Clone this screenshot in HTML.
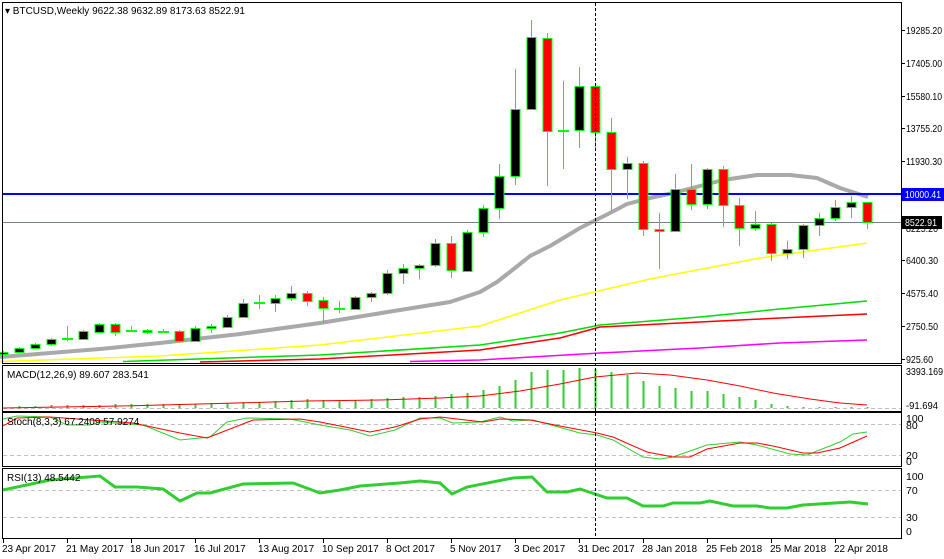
<!DOCTYPE html>
<html><head><meta charset="utf-8"><style>
html,body{margin:0;padding:0;background:#fff;}
svg{display:block;font-family:"Liberation Sans",sans-serif;font-size:10px;}
</style></head><body>
<svg width="944" height="559" viewBox="0 0 944 559" xmlns="http://www.w3.org/2000/svg">
<rect width="944" height="559" fill="#fff"/>
<g fill="none" stroke-linejoin="round">
<polyline stroke="#ff00ff" stroke-width="1.5" points="410,361.5 480,360 600,353 700,348 780,343 867,340"/>
<polyline stroke="#ff0000" stroke-width="1.5" points="200,362 320,359 480,350 560,338 600,327 700,322 780,318 867,314"/>
<polyline stroke="#00dd00" stroke-width="1.5" points="123,361.5 320,355 480,345 560,333 600,325 700,317 780,309 867,301"/>
<polyline stroke="#ffff00" stroke-width="1.5" points="0,361.5 160,356 320,345 480,326 560,300 650,279 760,258 867,243"/>
<polyline stroke="#a9a9a9" stroke-width="4" points="0,357 50,353 100,349 160,343 240,334 320,323 400,310 450,302 480,292 497,282 515,268 530,256 550,246 580,228 610,213 627,204 650,198 673,193 700,186 723,180 757,175 790,175 817,178 840,188 868,197"/>
</g>
<line x1="3" y1="222.5" x2="901" y2="222.5" stroke="#708090" stroke-width="1"/>
<line x1="3" y1="194" x2="901" y2="194" stroke="#0000ff" stroke-width="2"/>
<g stroke="#00ff00" stroke-width="1" shape-rendering="crispEdges">
<line x1="3.5" y1="351" x2="3.5" y2="355"/><rect x="-1" y="352.5" width="9" height="2" fill="#000"/>
<line x1="19.5" y1="347" x2="19.5" y2="353"/><rect x="15" y="348.5" width="9" height="4" fill="#000"/>
<line x1="35.5" y1="343" x2="35.5" y2="349"/><rect x="31" y="344.5" width="9" height="4" fill="#000"/>
<line x1="51.5" y1="338" x2="51.5" y2="346"/><rect x="47" y="339.5" width="9" height="5" fill="#000"/>
<line x1="67.5" y1="326" x2="67.5" y2="341"/><rect x="62.5" y="338.5" width="10" height="1" fill="#00ff00"/>
<line x1="83.5" y1="330" x2="83.5" y2="340"/><rect x="79" y="331.5" width="9" height="8" fill="#000"/>
<line x1="99.5" y1="323" x2="99.5" y2="332"/><rect x="95" y="324.5" width="9" height="8" fill="#000"/>
<line x1="115.5" y1="323" x2="115.5" y2="336"/><rect x="111" y="324.5" width="9" height="8" fill="#f00"/>
<line x1="131.5" y1="326" x2="131.5" y2="332"/><rect x="126.5" y="330.5" width="10" height="1" fill="#00ff00"/>
<line x1="147.5" y1="329" x2="147.5" y2="334"/><rect x="143" y="330.5" width="9" height="2" fill="#f00"/>
<line x1="163.5" y1="329" x2="163.5" y2="333"/><rect x="158.5" y="331.5" width="10" height="1" fill="#00ff00"/>
<line x1="179.5" y1="330" x2="179.5" y2="343"/><rect x="175" y="331.5" width="9" height="10" fill="#f00"/>
<line x1="195.5" y1="326" x2="195.5" y2="342"/><rect x="191" y="328.5" width="9" height="13" fill="#000"/>
<line x1="211.5" y1="324" x2="211.5" y2="333"/><rect x="207" y="326.5" width="9" height="2" fill="#000"/>
<line x1="227.5" y1="315" x2="227.5" y2="328"/><rect x="223" y="317.5" width="9" height="10" fill="#000"/>
<line x1="243.5" y1="299" x2="243.5" y2="318"/><rect x="239" y="303.5" width="9" height="14" fill="#000"/>
<line x1="259.5" y1="295" x2="259.5" y2="309"/><rect x="254.5" y="302.5" width="10" height="1" fill="#00ff00"/>
<line x1="275.5" y1="295" x2="275.5" y2="312"/><rect x="271" y="298.5" width="9" height="5" fill="#000"/>
<line x1="291.5" y1="286" x2="291.5" y2="301"/><rect x="287" y="293.5" width="9" height="5" fill="#000"/>
<line x1="307.5" y1="291" x2="307.5" y2="306"/><rect x="303" y="293.5" width="9" height="8" fill="#f00"/>
<line x1="323.5" y1="297" x2="323.5" y2="323"/><rect x="319" y="300.5" width="9" height="8" fill="#f00"/>
<line x1="339.5" y1="301" x2="339.5" y2="313"/><rect x="334.5" y="308.5" width="10" height="1" fill="#00ff00"/>
<line x1="355.5" y1="296" x2="355.5" y2="310"/><rect x="351" y="297.5" width="9" height="12" fill="#000"/>
<line x1="371.5" y1="292" x2="371.5" y2="302"/><rect x="367" y="293.5" width="9" height="4" fill="#000"/>
<line x1="387.5" y1="270" x2="387.5" y2="295"/><rect x="383" y="273.5" width="9" height="20" fill="#000"/>
<line x1="403.5" y1="264" x2="403.5" y2="284"/><rect x="399" y="268.5" width="9" height="5" fill="#000"/>
<line x1="419.5" y1="264" x2="419.5" y2="279"/><rect x="415" y="265.5" width="9" height="3" fill="#000"/>
<line x1="435.5" y1="239" x2="435.5" y2="267"/><rect x="431" y="243.5" width="9" height="22" fill="#000"/>
<line x1="451.5" y1="236" x2="451.5" y2="278"/><rect x="447" y="243.5" width="9" height="27" fill="#f00"/>
<line x1="467.5" y1="230" x2="467.5" y2="272"/><rect x="463" y="232.5" width="9" height="39" fill="#000"/>
<line x1="483.5" y1="205" x2="483.5" y2="237"/><rect x="479" y="208.5" width="9" height="24" fill="#000"/>
<line x1="499.5" y1="164" x2="499.5" y2="219"/><rect x="495" y="176.5" width="9" height="32" fill="#000"/>
<line x1="515.5" y1="69" x2="515.5" y2="185"/><rect x="511" y="109.5" width="9" height="67" fill="#000"/>
<line x1="531.5" y1="20" x2="531.5" y2="110"/><rect x="527" y="37.5" width="9" height="72" fill="#000"/>
<line x1="547.5" y1="33" x2="547.5" y2="186"/><rect x="543" y="38.5" width="9" height="93" fill="#f00"/>
<line x1="563.5" y1="81" x2="563.5" y2="169"/><rect x="558.5" y="130.5" width="10" height="1" fill="#00ff00"/>
<line x1="579.5" y1="67" x2="579.5" y2="148"/><rect x="575" y="86.5" width="9" height="44" fill="#000"/>
<line x1="595.5" y1="83" x2="595.5" y2="150"/><rect x="591" y="86.5" width="9" height="46" fill="#f00"/>
<line x1="611.5" y1="118" x2="611.5" y2="211"/><rect x="607" y="132.5" width="9" height="37" fill="#f00"/>
<line x1="627.5" y1="157" x2="627.5" y2="199"/><rect x="623" y="163.5" width="9" height="6" fill="#000"/>
<line x1="643.5" y1="161" x2="643.5" y2="236"/><rect x="639" y="163.5" width="9" height="66" fill="#f00"/>
<line x1="659.5" y1="213" x2="659.5" y2="269"/><rect x="655" y="229.5" width="9" height="2" fill="#f00"/>
<line x1="675.5" y1="174" x2="675.5" y2="232"/><rect x="671" y="189.5" width="9" height="42" fill="#000"/>
<line x1="691.5" y1="164" x2="691.5" y2="210"/><rect x="687" y="189.5" width="9" height="15" fill="#f00"/>
<line x1="707.5" y1="168" x2="707.5" y2="209"/><rect x="703" y="169.5" width="9" height="35" fill="#000"/>
<line x1="723.5" y1="166" x2="723.5" y2="227"/><rect x="719" y="169.5" width="9" height="36" fill="#f00"/>
<line x1="739.5" y1="198" x2="739.5" y2="246"/><rect x="735" y="205.5" width="9" height="23" fill="#f00"/>
<line x1="755.5" y1="211" x2="755.5" y2="231"/><rect x="751" y="224.5" width="9" height="4" fill="#000"/>
<line x1="771.5" y1="223" x2="771.5" y2="261"/><rect x="767" y="224.5" width="9" height="29" fill="#f00"/>
<line x1="787.5" y1="241" x2="787.5" y2="259"/><rect x="783" y="249.5" width="9" height="4" fill="#000"/>
<line x1="803.5" y1="224" x2="803.5" y2="258"/><rect x="799" y="225.5" width="9" height="24" fill="#000"/>
<line x1="819.5" y1="213" x2="819.5" y2="236"/><rect x="815" y="218.5" width="9" height="7" fill="#000"/>
<line x1="835.5" y1="200" x2="835.5" y2="221"/><rect x="831" y="207.5" width="9" height="11" fill="#000"/>
<line x1="851.5" y1="196" x2="851.5" y2="218"/><rect x="847" y="202.5" width="9" height="5" fill="#000"/>
<line x1="867.5" y1="202" x2="867.5" y2="229"/><rect x="863" y="202.5" width="9" height="20" fill="#f00"/>
</g>

<line x1="3" y1="408.5" x2="901" y2="408.5" stroke="#c0c0c0" stroke-dasharray="4,3"/>
<g stroke="#32cd32" stroke-width="2" shape-rendering="crispEdges">
<line x1="19.5" y1="408" x2="19.5" y2="406"/><line x1="35.5" y1="408" x2="35.5" y2="406"/><line x1="51.5" y1="408" x2="51.5" y2="405"/><line x1="67.5" y1="408" x2="67.5" y2="405"/><line x1="83.5" y1="408" x2="83.5" y2="405"/><line x1="99.5" y1="408" x2="99.5" y2="405"/><line x1="115.5" y1="408" x2="115.5" y2="404"/><line x1="131.5" y1="408" x2="131.5" y2="404"/><line x1="147.5" y1="408" x2="147.5" y2="404"/><line x1="163.5" y1="408" x2="163.5" y2="404"/><line x1="179.5" y1="408" x2="179.5" y2="404"/><line x1="195.5" y1="408" x2="195.5" y2="404"/><line x1="211.5" y1="408" x2="211.5" y2="403"/><line x1="227.5" y1="408" x2="227.5" y2="403"/><line x1="243.5" y1="408" x2="243.5" y2="402"/><line x1="259.5" y1="408" x2="259.5" y2="402"/><line x1="275.5" y1="408" x2="275.5" y2="401"/><line x1="291.5" y1="408" x2="291.5" y2="400"/><line x1="307.5" y1="408" x2="307.5" y2="399"/><line x1="323.5" y1="408" x2="323.5" y2="400"/><line x1="339.5" y1="408" x2="339.5" y2="401"/><line x1="355.5" y1="408" x2="355.5" y2="400"/><line x1="371.5" y1="408" x2="371.5" y2="399"/><line x1="387.5" y1="408" x2="387.5" y2="398"/><line x1="403.5" y1="408" x2="403.5" y2="397"/><line x1="419.5" y1="408" x2="419.5" y2="397"/><line x1="435.5" y1="408" x2="435.5" y2="396"/><line x1="451.5" y1="408" x2="451.5" y2="394"/><line x1="467.5" y1="408" x2="467.5" y2="393"/><line x1="483.5" y1="408" x2="483.5" y2="390"/><line x1="499.5" y1="408" x2="499.5" y2="386"/><line x1="515.5" y1="408" x2="515.5" y2="380"/><line x1="531.5" y1="408" x2="531.5" y2="372"/><line x1="547.5" y1="408" x2="547.5" y2="370"/><line x1="563.5" y1="408" x2="563.5" y2="370"/><line x1="579.5" y1="408" x2="579.5" y2="368"/><line x1="595.5" y1="408" x2="595.5" y2="369"/><line x1="611.5" y1="408" x2="611.5" y2="372"/><line x1="627.5" y1="408" x2="627.5" y2="375"/><line x1="643.5" y1="408" x2="643.5" y2="381"/><line x1="659.5" y1="408" x2="659.5" y2="386"/><line x1="675.5" y1="408" x2="675.5" y2="388"/><line x1="691.5" y1="408" x2="691.5" y2="391"/><line x1="707.5" y1="408" x2="707.5" y2="391"/><line x1="723.5" y1="408" x2="723.5" y2="394"/><line x1="739.5" y1="408" x2="739.5" y2="397"/><line x1="755.5" y1="408" x2="755.5" y2="400"/><line x1="771.5" y1="408" x2="771.5" y2="404"/><line x1="787.5" y1="408" x2="787.5" y2="406"/><line x1="803.5" y1="408" x2="803.5" y2="407"/><line x1="819.5" y1="408" x2="819.5" y2="407"/><line x1="835.5" y1="408" x2="835.5" y2="407"/><line x1="851.5" y1="408" x2="851.5" y2="407"/><line x1="867.5" y1="408" x2="867.5" y2="407"/>
</g>
<polyline fill="none" stroke="#ff0000" stroke-width="1" points="3,408 60,407 120,406 200,404 307,401 380,400 440,398 480,396 520,391 560,384 595,377 637,373 670,375 707,380 740,386 773,393 810,399 840,403 867,405"/>

<line x1="3" y1="424.5" x2="901" y2="424.5" stroke="#c0c0c0" stroke-dasharray="4,3"/>
<line x1="3" y1="455.5" x2="901" y2="455.5" stroke="#c0c0c0" stroke-dasharray="4,3"/>
<polyline fill="none" stroke="#32cd32" stroke-width="1" points="3,419 17,416 50,417 67,425 90,425 100,422 143,425 180,440 210,437 227,422 247,418 290,419 320,425 350,430 370,436 395,430 420,418 440,418 453,423 480,422 500,417 513,421 533,420 580,433 597,435 613,440 643,457 660,459 673,457 707,445 740,442 757,445 790,454 807,455 840,442 853,434 867,432"/>
<polyline fill="none" stroke="#ff0000" stroke-width="1" points="3,426 17,418 50,417 133,423 180,433 207,438 253,420 300,419 320,422 350,428 370,432 395,427 420,419 440,417 483,422 500,419 530,420 560,426 597,433 613,437 647,452 673,457 690,457 707,449 740,443 757,443 773,446 803,453 817,453 840,448 867,436"/>

<line x1="3" y1="490.5" x2="901" y2="490.5" stroke="#c0c0c0" stroke-dasharray="4,3"/>
<line x1="3" y1="517.5" x2="901" y2="517.5" stroke="#c0c0c0" stroke-dasharray="4,3"/>
<polyline fill="none" stroke="#32cd32" stroke-width="3" points="3,490 50,480 100,476 115,487 137,487 163,489 180,501 197,493 210,493 243,484 293,483 320,493 340,490 360,486 400,483 420,481 440,483 452,494 467,487 513,478 532,477 547,492 567,492 580,489 607,498 627,498 643,506 663,506 673,503 700,503 710,501 733,506 757,506 770,508 787,508 803,505 850,502 868,504"/>

<line x1="595.5" y1="3" x2="595.5" y2="538" stroke="#000" stroke-dasharray="3,2"/>

<g fill="none" stroke="#000" stroke-width="1" shape-rendering="crispEdges">
<rect x="2.5" y="2.5" width="899" height="361"/>
<rect x="2.5" y="365.5" width="899" height="46"/>
<rect x="2.5" y="412.5" width="899" height="54"/>
<rect x="2.5" y="468.5" width="899" height="70"/>
</g>
<g stroke="#000" shape-rendering="crispEdges">
<line x1="902" y1="30.5" x2="905" y2="30.5"/><line x1="902" y1="63.5" x2="905" y2="63.5"/><line x1="902" y1="96.5" x2="905" y2="96.5"/><line x1="902" y1="128.5" x2="905" y2="128.5"/><line x1="902" y1="161.5" x2="905" y2="161.5"/><line x1="902" y1="228.5" x2="905" y2="228.5"/><line x1="902" y1="260.5" x2="905" y2="260.5"/><line x1="902" y1="293.5" x2="905" y2="293.5"/><line x1="902" y1="326.5" x2="905" y2="326.5"/><line x1="902" y1="359.5" x2="905" y2="359.5"/>
<line x1="3.5" y1="539" x2="3.5" y2="543"/><line x1="67.5" y1="539" x2="67.5" y2="543"/><line x1="131.5" y1="539" x2="131.5" y2="543"/><line x1="195.5" y1="539" x2="195.5" y2="543"/><line x1="259.5" y1="539" x2="259.5" y2="543"/><line x1="323.5" y1="539" x2="323.5" y2="543"/><line x1="387.5" y1="539" x2="387.5" y2="543"/><line x1="451.5" y1="539" x2="451.5" y2="543"/><line x1="515.5" y1="539" x2="515.5" y2="543"/><line x1="579.5" y1="539" x2="579.5" y2="543"/><line x1="643.5" y1="539" x2="643.5" y2="543"/><line x1="707.5" y1="539" x2="707.5" y2="543"/><line x1="771.5" y1="539" x2="771.5" y2="543"/><line x1="835.5" y1="539" x2="835.5" y2="543"/>
</g>
<g fill="#000" font-size="10.5">
<text x="906" y="34" textLength="36" lengthAdjust="spacingAndGlyphs">19285.20</text>
<text x="906" y="67" textLength="36" lengthAdjust="spacingAndGlyphs">17405.00</text>
<text x="906" y="100" textLength="36" lengthAdjust="spacingAndGlyphs">15580.10</text>
<text x="906" y="132" textLength="36" lengthAdjust="spacingAndGlyphs">13755.20</text>
<text x="906" y="165" textLength="36" lengthAdjust="spacingAndGlyphs">11930.30</text>
<text x="906" y="232" textLength="32" lengthAdjust="spacingAndGlyphs">8225.20</text>
<text x="906" y="264" textLength="32" lengthAdjust="spacingAndGlyphs">6400.30</text>
<text x="906" y="297" textLength="32" lengthAdjust="spacingAndGlyphs">4575.40</text>
<text x="906" y="330" textLength="32" lengthAdjust="spacingAndGlyphs">2750.50</text>
<text x="906" y="363" textLength="27" lengthAdjust="spacingAndGlyphs">925.60</text>
<text x="906" y="375" textLength="37" lengthAdjust="spacingAndGlyphs">3393.169</text>
<text x="906" y="409" textLength="32" lengthAdjust="spacingAndGlyphs">-91.694</text>
<text x="906" y="422">100</text>
<text x="906" y="429">80</text>
<text x="906" y="459">20</text>
<text x="906" y="465">0</text>
<text x="906" y="480">100</text>
<text x="906" y="494">70</text>
<text x="906" y="521">30</text>
<text x="906" y="535">0</text>
</g>
<rect x="902" y="188" width="42" height="13" fill="#0000ff"/>
<text x="905" y="198" fill="#fff" font-size="10.5" textLength="36" lengthAdjust="spacingAndGlyphs">10000.41</text>
<rect x="902" y="216" width="40" height="13" fill="#000"/>
<text x="905" y="226" fill="#fff" font-size="10.5" textLength="32" lengthAdjust="spacingAndGlyphs">8522.91</text>

<g fill="#000">
<text x="5" y="14">▾ BTCUSD,Weekly  9622.38 9632.89 8173.63 8522.91</text>
<text x="7" y="378">MACD(12,26,9) 89.607 283.541</text>
<text x="7" y="425">Stoch(8,3,3) 67.2409 57.9274</text>
<text x="7" y="481">RSI(13) 48.5442</text>
<text x="2" y="552">23 Apr 2017</text>
<text x="66" y="552">21 May 2017</text>
<text x="130" y="552">18 Jun 2017</text>
<text x="194" y="552">16 Jul 2017</text>
<text x="258" y="552">13 Aug 2017</text>
<text x="322" y="552">10 Sep 2017</text>
<text x="386" y="552">8 Oct 2017</text>
<text x="450" y="552">5 Nov 2017</text>
<text x="514" y="552">3 Dec 2017</text>
<text x="578" y="552">31 Dec 2017</text>
<text x="642" y="552">28 Jan 2018</text>
<text x="706" y="552">25 Feb 2018</text>
<text x="770" y="552">25 Mar 2018</text>
<text x="834" y="552">22 Apr 2018</text>
</g>
</svg>
</body></html>
